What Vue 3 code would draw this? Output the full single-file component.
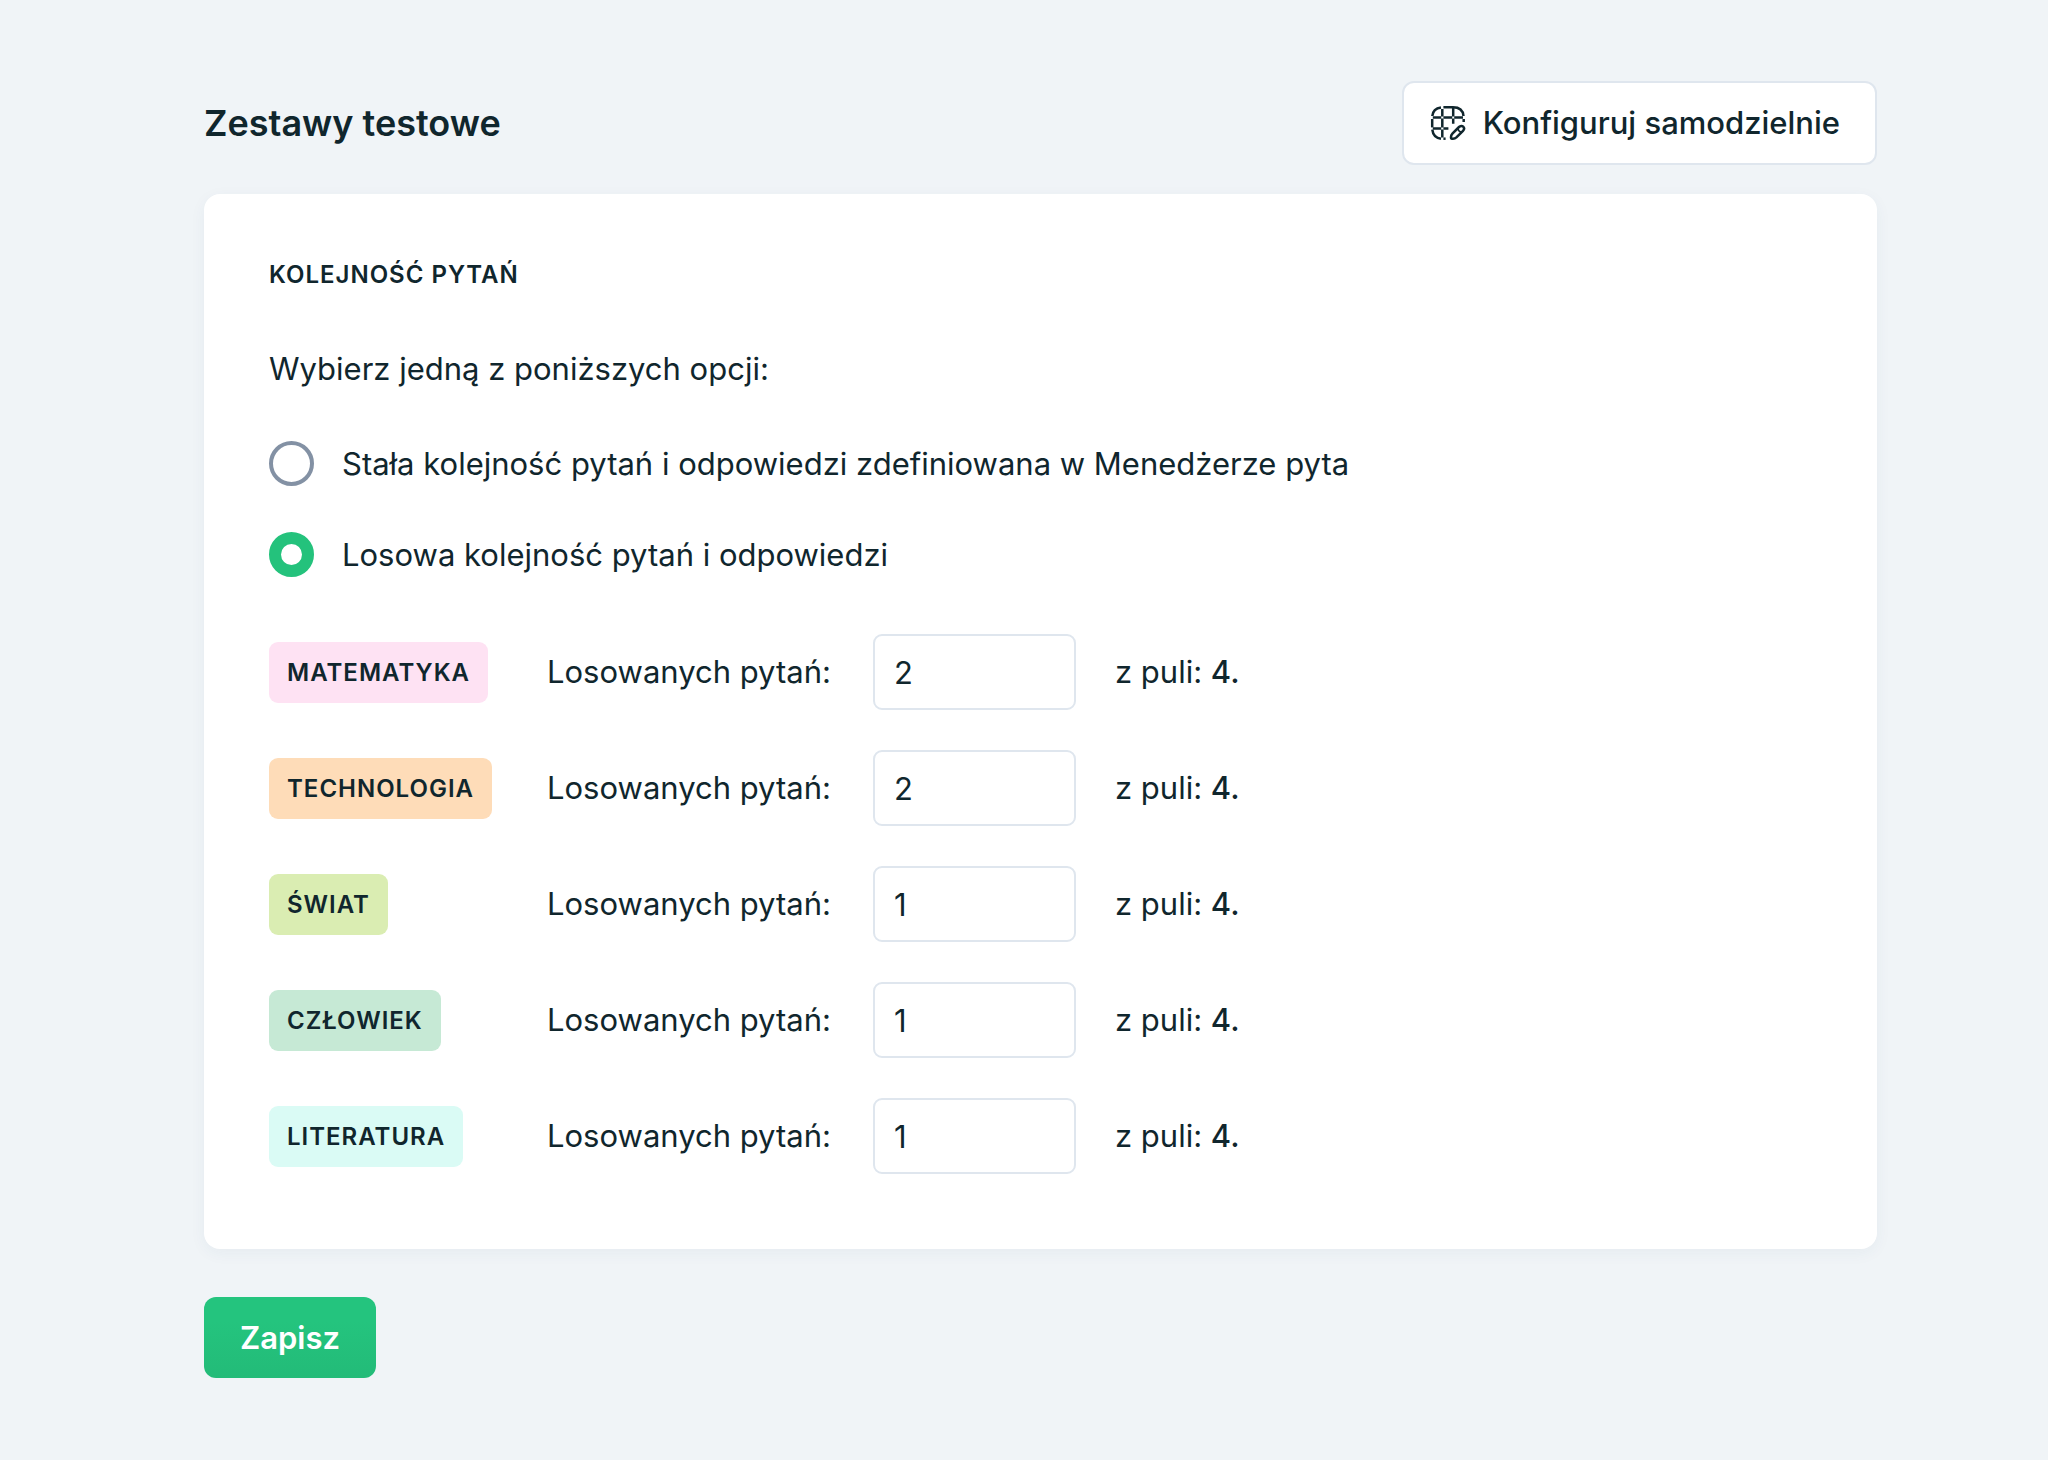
<script setup>
import { ref } from 'vue'

const order = ref('random')

const categories = ref([
  { id: 'matematyka', name: 'Matematyka', color: '#fee2f3', drawn: 2, pool: 4 },
  { id: 'technologia', name: 'Technologia', color: '#fedcb8', drawn: 2, pool: 4 },
  { id: 'swiat', name: 'Świat', color: '#daedb2', drawn: 1, pool: 4 },
  { id: 'czlowiek', name: 'Człowiek', color: '#c6e9d5', drawn: 1, pool: 4 },
  { id: 'literatura', name: 'Literatura', color: '#dafbf5', drawn: 1, pool: 4 },
])
</script>

<template>
  <main class="page">
    <header class="header">
      <h1 class="title">Zestawy testowe</h1>
      <button type="button" class="configure">
        <svg class="icon" viewBox="0 0 36 36" fill="none" stroke="currentColor" stroke-width="2.5" stroke-linejoin="round" aria-hidden="true">
          <path d="M11 2.500C5.800 3.200 2.800 6 2.300 11" />
          <path d="M13.400 2.300H23c6.500 0 10 3 10.500 8.700" />
          <path d="M2.800 12.500H11.200M13.400 12.500H22.200M24.200 12.500H33" />
          <path d="M2.200 14V22.400" />
          <path d="M2.300 24.600c.6 5.200 3.600 8.400 8.700 9.100" />
          <path d="M13.400 33.700h2.200" />
          <path d="M12.300 4V11.400M12.300 13.600V22.400M12.300 24.600V32.600" />
          <path d="M23.200 3V11.400M23.200 13.600V18.800" />
          <path d="M33.700 14V17" />
          <path d="M2.800 23.500h8.400M13.400 23.500h5" />
          <path d="M21.200 33.500c-.4-1.600 0-3.700 1.200-4.900l6.600-6.600c1.400-1.400 3.100-1.400 4.200-.3s1.100 2.800-.2 4.100l-6.600 6.600c-1.300 1.200-3.500 1.500-5.200 1.100z" />
          <path d="M27.800 23.600c.5 2 1.700 3.200 3.700 3.700" stroke-width="1.800" />
        </svg>
        <span>Konfiguruj samodzielnie</span>
      </button>
    </header>

    <form class="form" @submit.prevent>
      <section class="card">
        <h2 class="section-title">Kolejność pytań</h2>

        <fieldset class="options">
          <legend class="lead">Wybierz jedną z poniższych opcji:</legend>
          <label class="option">
            <input v-model="order" class="radio" type="radio" name="order" value="fixed" />
            <span>Stała kolejność pytań i odpowiedzi zdefiniowana w Menedżerze pyta</span>
          </label>
          <label class="option">
            <input v-model="order" class="radio" type="radio" name="order" value="random" />
            <span>Losowa kolejność pytań i odpowiedzi</span>
          </label>
        </fieldset>

        <div class="rows">
          <div v-for="c in categories" :key="c.id" class="row">
            <div><span class="tag" :style="{ backgroundColor: c.color }">{{ c.name }}</span></div>
            <label :for="c.id">Losowanych pytań:</label>
            <input :id="c.id" v-model="c.drawn" class="count" type="text" inputmode="numeric" />
            <span>z puli: <span class="pool">{{ c.pool }}.</span></span>
          </div>
        </div>
      </section>

      <button type="submit" class="save">Zapisz</button>
    </form>
  </main>
</template>

<style>
body {
  margin: 0;
  background: #f0f4f7;
}
</style>

<style scoped>
.page {
  box-sizing: border-box;
  min-height: 100vh;
  padding: 81px 171px 80px 204px;
  background: #f0f4f7;
  color: #10262d;
  font-family: Inter, "Liberation Sans", sans-serif;
  font-size: 31px;
  line-height: 40px;
}

.header {
  display: flex;
  align-items: center;
  justify-content: space-between;
  margin-bottom: 29px;
}

.title {
  margin: 0;
  font-size: 36px;
  font-weight: 600;
  line-height: 44px;
}

button,
input {
  box-sizing: border-box;
  margin: 0;
  color: inherit;
  font: inherit;
}

.configure {
  display: flex;
  align-items: center;
  gap: 17px;
  height: 84px;
  padding: 0 35px 0 26px;
  border: 2px solid #dfe6ee;
  border-radius: 12px;
  background: #fff;
  font-weight: 500;
}

.icon {
  width: 36px;
  height: 36px;
}

.form {
  display: flex;
  flex-direction: column;
  align-items: flex-start;
  gap: 48px;
}

.card {
  box-sizing: border-box;
  width: 100%;
  padding: 65px 65px 75px;
  border-radius: 16px;
  background: #fff;
  box-shadow: 0 4px 16px rgba(30, 80, 110, 0.05);
}

.section-title {
  margin: 0 0 58px;
  font-size: 24px;
  font-weight: 600;
  line-height: 32px;
  letter-spacing: 1px;
  text-transform: uppercase;
}

.options {
  display: flex;
  flex-direction: column;
  gap: 46px;
  margin: 0;
  padding: 0;
  border: 0;
}

.lead {
  margin-bottom: 52px;
  padding: 0;
}

.option {
  display: flex;
  align-items: center;
  gap: 28px;
  height: 45px;
}

.radio {
  flex: none;
  width: 45px;
  height: 45px;
  border: 4px solid #8391a4;
  border-radius: 50%;
  background: #fff;
  appearance: none;
}

.radio:checked {
  border: 12px solid #24c27c;
}

.rows {
  display: flex;
  flex-direction: column;
  gap: 40px;
  margin-top: 57px;
}

.row {
  display: grid;
  grid-template-columns: 278px 326px 203px auto;
  align-items: center;
  justify-content: start;
}

.row > :last-child {
  margin-left: 39px;
}

.tag {
  display: inline-block;
  padding: 14px 18px;
  border-radius: 9px;
  font-size: 24px;
  font-weight: 600;
  line-height: 33px;
  letter-spacing: 1px;
  text-transform: uppercase;
  vertical-align: top;
}

.count {
  width: 100%;
  height: 76px;
  padding: 0 19px;
  border: 2px solid #dfe6ee;
  border-radius: 9px;
  background: #fff;
}

.pool {
  font-weight: 500;
}

.save {
  height: 81px;
  padding: 0 36px;
  border: 0;
  border-radius: 12px;
  background: linear-gradient(#24c47e 30%, #23bb78);
  color: #fff;
  font-weight: 600;
}
</style>
